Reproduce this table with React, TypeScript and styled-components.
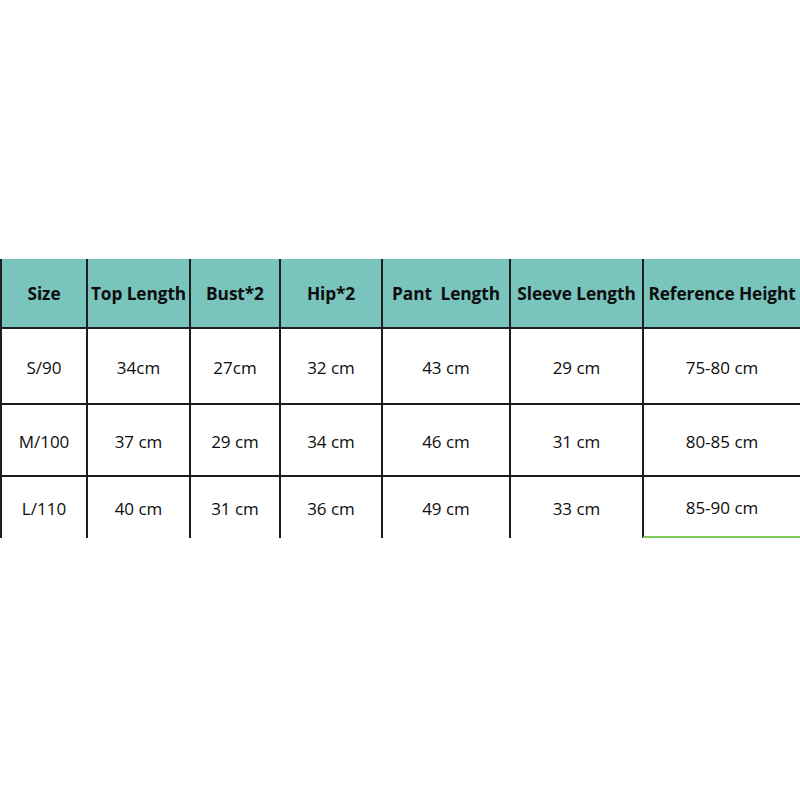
import React from "react";
import styled, { createGlobalStyle } from "styled-components";

const Global = createGlobalStyle`
  html, body { margin: 0; padding: 0; background: #ffffff; }
  body { font-family: "Open Sans", "Noto Sans", sans-serif; }
`;

const Page = styled.div`
  width: 800px;
  height: 800px;
  padding-top: 259px;
  box-sizing: border-box;
  background: #fff;
`;

const Table = styled.div`
  display: grid;
  grid-template-columns: 86px 103px 90px 102px 128px 133px 158px;
  grid-template-rows: 70px 76px 72px 61px;
  width: 800px;
`;

const Cell = styled.div<{ $head?: boolean; $last?: boolean; $green?: boolean }>`
  display: flex;
  align-items: center;
  justify-content: center;
  box-sizing: border-box;
  border-left: 2px solid #1e1e1e;
  border-bottom: ${(p) =>
    p.$green ? "2px solid #7cc95c" : p.$last ? "none" : "2px solid #1e1e1e"};
  background: ${(p) => (p.$head ? "#79c4bd" : "#ffffff")};
  color: #0d0d0d;
  font-size: ${(p) => (p.$head ? "17.3px" : "17px")};
  font-weight: ${(p) => (p.$head ? 700 : 400)};
  white-space: nowrap;
  letter-spacing: ${(p) => (p.$head ? "-0.1px" : "0")};
  padding-top: ${(p) => (p.$head ? "0" : "2px")};
`;

const headers = [
  "Size",
  "Top Length",
  "Bust*2",
  "Hip*2",
  "Pant\u00a0\u00a0Length",
  "Sleeve Length",
  "Reference Height",
];

const rows = [
  ["S/90", "34cm", "27cm", "32 cm", "43 cm", "29 cm", "75-80 cm"],
  ["M/100", "37 cm", "29 cm", "34 cm", "46 cm", "31 cm", "80-85 cm"],
  ["L/110", "40 cm", "31 cm", "36 cm", "49 cm", "33 cm", "85-90 cm"],
];

export default function App() {
  return (
    <>
      <Global />
      <Page>
        <Table>
          {headers.map((h) => (
            <Cell key={h} $head>
              {h}
            </Cell>
          ))}
          {rows.map((r, ri) =>
            r.map((c, ci) => (
              <Cell
                key={`${ri}-${ci}`}
                $last={ri === rows.length - 1}
                $green={ri === rows.length - 1 && ci === r.length - 1}
              >
                {c}
              </Cell>
            ))
          )}
        </Table>
      </Page>
    </>
  );
}
